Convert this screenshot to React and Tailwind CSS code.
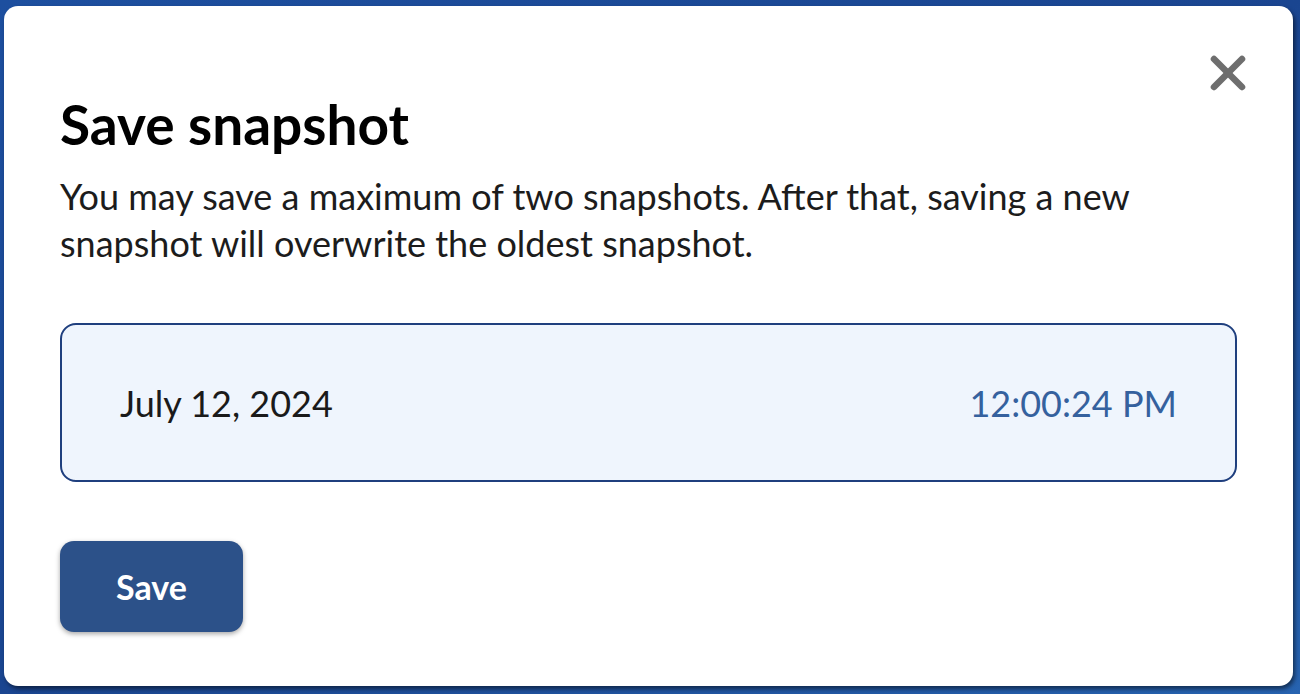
import { X } from "lucide-react";

const SnapshotCard = ({ date, time }) => {
  return (
    <div className="flex items-center justify-between h-[159px] px-[58px] rounded-[16px] border-2 border-[#1f3f7e] bg-[#eff5fd]">
      <span className="text-[36px] text-[#1a1a1a]">{date}</span>
      <span className="text-[36px] text-[#35619e]">{time}</span>
    </div>
  );
};

export default function App() {
  return (
    <div
      className="h-[694px] w-[1300px] bg-gradient-to-br from-[#1d4f9f] via-[#1a4590] to-[#2763b0] pt-[6px] pl-[4px] pr-[7px] pb-[8px]"
      style={{ fontFamily: "Lato, 'Open Sans', sans-serif" }}
    >
      <div className="relative h-full rounded-[14px] bg-white px-[56px] pt-[88px] shadow-[2px_3px_4px_rgba(0,0,0,0.5)]">
        <button className="absolute right-[37px] top-[39px] text-[#6e6e6e]">
          <X size={56} strokeWidth={2.8} />
        </button>
        <h2 className="text-[55px] font-bold leading-[60px] text-black">
          Save snapshot
        </h2>
        <p className="mt-[19px] text-[36px] leading-[47px] text-[#1c1c1c]">
          You may save a maximum of two snapshots. After that, saving a new
          <br />
          snapshot will overwrite the oldest snapshot.
        </p>
        <div className="mt-[56px]">
          <SnapshotCard date="July 12, 2024" time="12:00:24 PM" />
        </div>
        <button className="mt-[59px] h-[91px] w-[183px] rounded-[14px] bg-[#2c5189] text-[34px] font-bold text-white shadow-[0_2px_5px_rgba(0,0,0,0.35)]">
          Save
        </button>
      </div>
    </div>
  );
}
